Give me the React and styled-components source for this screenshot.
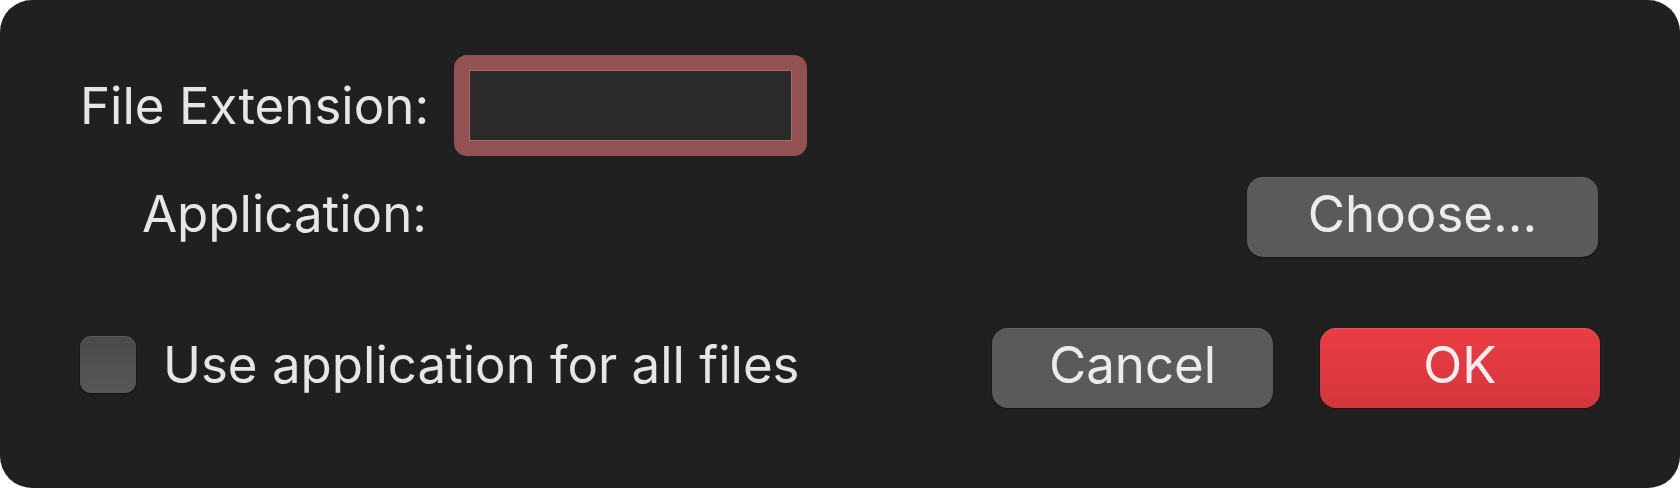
import { createGlobalStyle, styled } from "styled-components"

const GlobalStyle = createGlobalStyle`
  html, body {
    margin: 0;
    padding: 0;
    background: #fff;
  }

  body {
    font-family: Inter, "Liberation Sans", Arial, sans-serif;
    -webkit-font-smoothing: antialiased;
  }
`

const Dialog = styled.div`
  box-sizing: border-box;
  width: 1680px;
  height: 488px;
  padding: 55px 80px 0 80px;
  background: #202020;
  border-radius: 32px;
  color: #e6e6e6;
  font-size: 51px;
  display: flex;
  flex-direction: column;
`

const Row = styled.div`
  display: flex;
  align-items: center;
  gap: 27px;
  margin-top: ${(p) => p.$gap || 0}px;
  height: ${(p) => p.$height}px;
`

const Label = styled.label`
  width: 347px;
  text-align: right;
  white-space: nowrap;
  padding-bottom: ${(p) => (p.$lift ? p.$lift * 2 : 0)}px;
`

const FocusRing = styled.div`
  box-sizing: border-box;
  width: 353px;
  height: 101px;
  padding: 15px;
  background: #935152;
  border-radius: 13px;
`

const TextField = styled.input`
  box-sizing: border-box;
  display: block;
  width: 100%;
  height: 100%;
  margin: 0;
  padding: 0 10px;
  background: #2a2a2a;
  border: 1px solid #a86a6b;
  outline: none;
  color: #e6e6e6;
  font: inherit;
`

const Spacer = styled.div`
  flex: 1;
`

const Button = styled.button`
  box-sizing: border-box;
  width: ${(p) => p.$width}px;
  height: 80px;
  margin: 0;
  padding: 0 0 7px;
  border: none;
  border-radius: 16px;
  background: ${(p) =>
    p.$primary
      ? "linear-gradient(to bottom, #eb3d44 0%, #d3363c 100%)"
      : "#5a5a5a"};
  box-shadow: 0 1px 2px rgba(0, 0, 0, 0.45),
    inset 0 1px 0 rgba(255, 255, 255, ${(p) => (p.$primary ? 0.12 : 0.06)});
  color: ${(p) => (p.$primary ? "#fdeced" : "#ececec")};
  font: inherit;
  font-size: 51px;
  line-height: 1;
  display: flex;
  align-items: center;
  justify-content: center;
  cursor: default;
`

const ButtonGroup = styled.div`
  display: flex;
  gap: 47px;
`

const CheckLabel = styled.label`
  display: flex;
  align-items: center;
  gap: 27px;
  margin-bottom: 8px;
  white-space: nowrap;
`

const CheckBox = styled.span`
  box-sizing: border-box;
  width: 56px;
  height: 57px;
  border-radius: 11px;
  background: linear-gradient(to bottom, #4b4b4b 0%, #575757 100%);
  box-shadow: 0 1px 2px rgba(0, 0, 0, 0.5),
    inset 0 1px 0 rgba(255, 255, 255, 0.08);
`

export default function App() {
  return (
    <>
      <GlobalStyle />
      <Dialog>
        <Row $height={101}>
          <Label htmlFor="ext">File Extension:</Label>
          <FocusRing>
            <TextField id="ext" />
          </FocusRing>
        </Row>

        <Row $gap={20} $height={81}>
          <Label $lift={3}>Application:</Label>
          <Spacer />
          <Button $width={351} style={{ marginRight: 2 }}>Choose...</Button>
        </Row>

        <Row $gap={71} $height={80}>
          <CheckLabel>
            <CheckBox />
            Use application for all files
          </CheckLabel>
          <Spacer />
          <ButtonGroup>
            <Button $width={281}>Cancel</Button>
            <Button $width={280} $primary>OK</Button>
          </ButtonGroup>
        </Row>
      </Dialog>
    </>
  )
}
